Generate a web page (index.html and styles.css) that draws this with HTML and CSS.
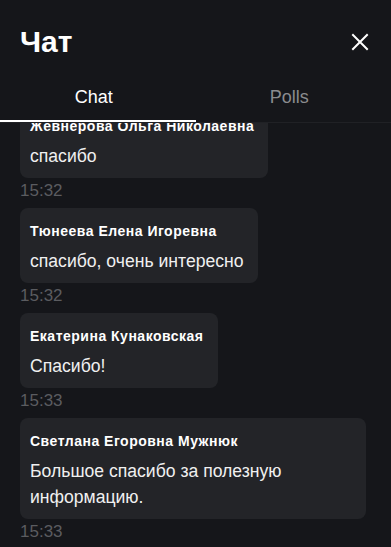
FILE: index.html
```html
<!DOCTYPE html>
<html lang="ru">
<head>
<meta charset="utf-8">
<title>Чат</title>
<link rel="stylesheet" href="styles.css">
</head>
<body>
<div class="panel">
  <header class="header">
    <h1 class="title">Чат</h1>
    <button class="close" aria-label="Закрыть">
      <svg width="24" height="24" viewBox="0 0 24 24" fill="none" stroke="#ffffff" stroke-width="2" stroke-linecap="square">
        <path d="M5 5L19 19M19 5L5 19"/>
      </svg>
    </button>
  </header>
  <nav class="tabs">
    <div class="tab active"><span>Chat</span></div>
    <div class="tab"><span>Polls</span></div>
  </nav>
  <div class="list">
    <div class="items">
      <div class="msg">
        <div class="bubble">
          <div class="name">Жевнерова Ольга Николаевна</div>
          <div class="text">спасибо</div>
        </div>
        <div class="time">15:32</div>
      </div>
      <div class="msg">
        <div class="bubble">
          <div class="name">Тюнеева Елена Игоревна</div>
          <div class="text">спасибо, очень интересно</div>
        </div>
        <div class="time">15:32</div>
      </div>
      <div class="msg">
        <div class="bubble">
          <div class="name">Екатерина Кунаковская</div>
          <div class="text">Спасибо!</div>
        </div>
        <div class="time">15:33</div>
      </div>
      <div class="msg">
        <div class="bubble">
          <div class="name">Светлана Егоровна Мужнюк</div>
          <div class="text">Большое спасибо за полезную информацию.</div>
        </div>
        <div class="time">15:33</div>
      </div>
    </div>
  </div>
</div>
</body>
</html>
```

FILE: styles.css
```css
html, body {
  margin: 0;
  padding: 0;
  background: #15161a;
}
body {
  font-family: "Liberation Sans", Arial, sans-serif;
  color: #ffffff;
  width: 391px;
  height: 547px;
  overflow: hidden;
}
.panel {
  display: flex;
  flex-direction: column;
  height: 547px;
}
.header {
  height: 84px;
  display: flex;
  align-items: center;
  justify-content: space-between;
  padding: 0 19px 0 20px;
  flex-shrink: 0;
}
.title {
  margin: 0;
  font-size: 30px;
  font-weight: 700;
  line-height: 36px;
}
.close {
  background: none;
  border: 0;
  padding: 0;
  width: 24px;
  height: 24px;
  display: flex;
  cursor: pointer;
}
.tabs {
  display: flex;
  border-bottom: 1px solid #202125;
  flex-shrink: 0;
}
.tab {
  flex: 1;
  display: flex;
  justify-content: center;
  font-size: 18px;
  line-height: 27px;
  height: 36px;
  color: #8b8b8e;
  border-bottom: 2px solid transparent;
}
.tab span {
  padding-right: 8px;
}
.tab.active {
  color: #ffffff;
  border-bottom-color: #ffffff;
}
.list {
  flex: 1;
  overflow: hidden;
  padding: 0 25px 0 20px;
}
.items {
  margin-top: -20px;
  display: flex;
  flex-direction: column;
  align-items: flex-start;
}
.msg {
  display: flex;
  flex-direction: column;
  align-items: flex-start;
  max-width: 100%;
}
.bubble {
  background: #232428;
  border-radius: 8px;
  padding: 11px 14px 9px 10px;
}
.name {
  font-size: 14px;
  font-weight: 700;
  letter-spacing: 0.5px;
  line-height: 24px;
}
.text {
  margin-top: 5px;
  font-size: 17.6px;
  line-height: 26px;
  color: #f0f0f0;
}
.time {
  margin: 3px 0 7px;
  font-size: 17px;
  line-height: 20px;
  color: #5b5c60;
}
```
